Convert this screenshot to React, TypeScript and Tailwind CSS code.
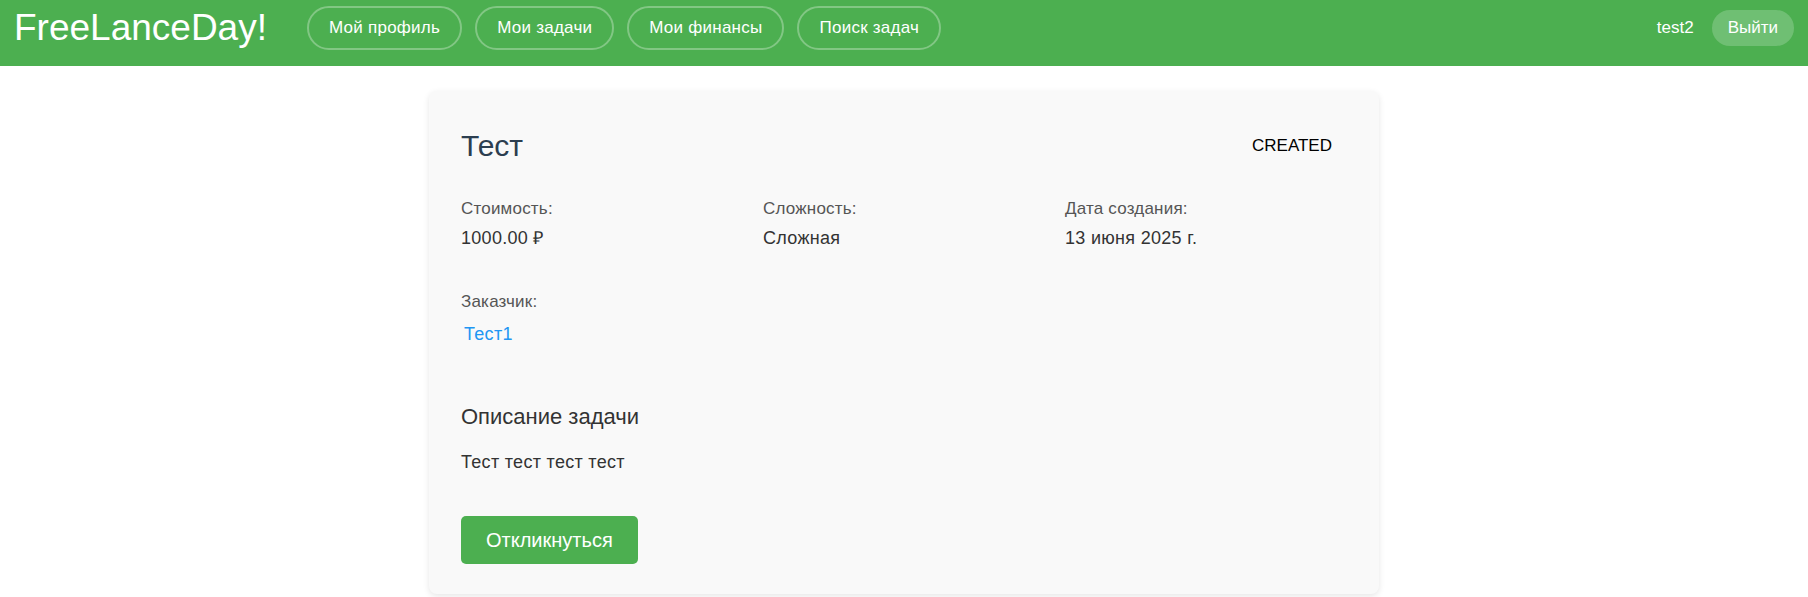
import React from "react";

const navItems = ["Мой профиль", "Мои задачи", "Мои финансы", "Поиск задач"];

interface InfoItemProps {
  label: string;
  children: React.ReactNode;
}

function InfoItem(props: InfoItemProps) {
  return (
    <div className="flex flex-col">
      <span className="text-[17px] leading-[20px] tracking-[0.2px] text-[#555]">{props.label}</span>
      <div className="mt-[8px] text-[18px] leading-[22px] tracking-[0.3px] text-[#333]">{props.children}</div>
    </div>
  );
}

export default function App() {
  return (
    <div className="min-h-screen bg-white font-['Liberation_Sans',Arial,sans-serif]">
      <header className="flex h-[66px] items-center justify-between bg-[#4CAF50] px-[14px] pt-[6px] pb-[16px]">
        <div className="flex items-center">
          <span className="text-[37px] leading-[42px] text-white">FreeLanceDay!</span>
          <nav className="ml-[40px] flex items-center gap-[13px]">
            {navItems.map((item) => (
              <a
                key={item}
                href="#"
                className="rounded-full border-2 border-white/30 px-5 py-[10px] text-[17px] leading-[20px] tracking-[0.25px] text-white"
              >
                {item}
              </a>
            ))}
          </nav>
        </div>
        <div className="flex items-center gap-[18px]">
          <span className="text-[17px] leading-[20px] text-white">test2</span>
          <button className="rounded-full bg-white/20 px-4 py-[8px] text-[17px] leading-[20px] text-white">
            Выйти
          </button>
        </div>
      </header>

      <main className="pt-[25px]">
        <div className="mx-auto w-[950px] rounded-lg bg-[#f9f9f9] px-8 pt-[39px] pb-[30px] shadow-[0_2px_6px_rgba(0,0,0,0.1)]">
          <div className="flex items-center justify-between">
            <h1 className="text-[30px] leading-[32px] text-[#2c3e50]">Тест</h1>
            <span className="px-[15px] py-[5px] text-[17px] leading-[20px] text-black">CREATED</span>
          </div>

          <div className="mt-[37px] grid grid-cols-3 gap-x-5 gap-y-[43px]">
            <InfoItem label="Стоимость:">1000.00 ₽</InfoItem>
            <InfoItem label="Сложность:">Сложная</InfoItem>
            <InfoItem label="Дата создания:">13 июня 2025 г.</InfoItem>
            <div className="flex flex-col">
              <span className="text-[17px] leading-[20px] tracking-[0.2px] text-[#555]">Заказчик:</span>
              <div className="mt-[9px]">
                <a
                  href="#"
                  className="inline-block px-[3px] py-[2px] text-[18px] leading-[22px] tracking-[0.3px] text-[#2196F3]"
                >
                  Тест1
                </a>
              </div>
            </div>
          </div>

          <h2 className="mt-[56px] text-[22px] leading-[28px] text-[#333]">Описание задачи</h2>
          <p className="mt-[20px] text-[18px] leading-[22px] tracking-[0.3px] text-[#333]">Тест тест тест тест</p>

          <button className="mt-[43px] h-[48px] rounded-[5px] bg-[#4CAF50] px-[25px] text-[20px] text-white">
            Откликнуться
          </button>
        </div>
      </main>
    </div>
  );
}
